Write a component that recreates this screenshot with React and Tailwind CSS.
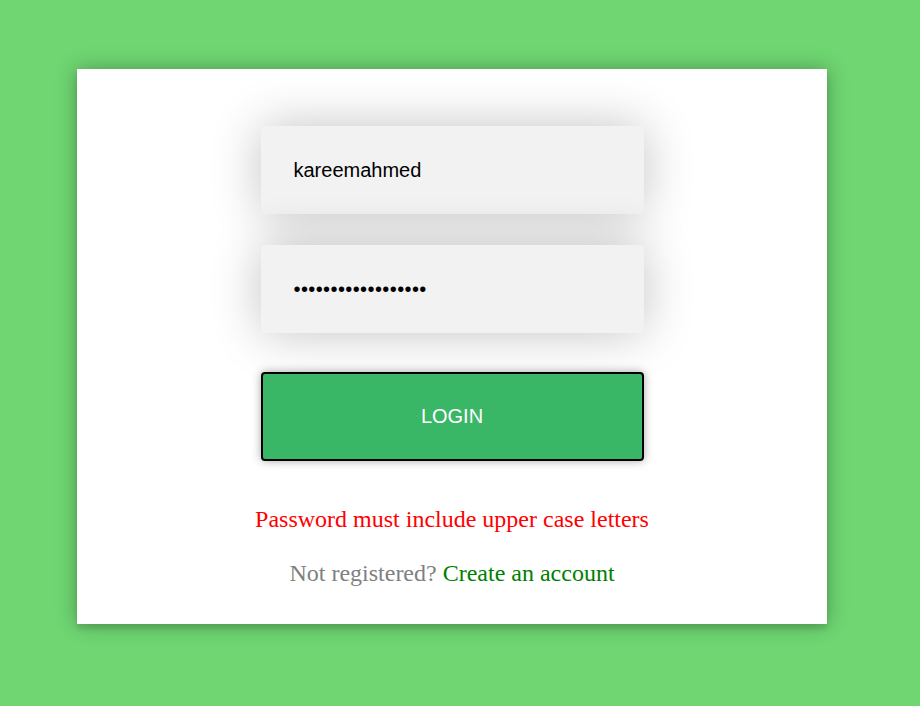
export default function App() {
  return (
    <div className="min-h-[706px] w-[920px] bg-[#6fd672] pt-[69px] pl-[77px]">
      <div className="flex h-[555px] w-[750px] flex-col items-center bg-white pt-[57px] shadow-[0_0_20px_rgba(0,0,0,0.3),0_5px_5px_rgba(0,0,0,0.1)]">
        <div className="flex h-[88px] w-[383px] items-center rounded-[4px] bg-[#f2f2f2] pl-[33px] shadow-[0_0_50px_rgba(0,0,0,0.24)] font-['Liberation_Sans',Arial,sans-serif] text-[20px] text-black">
          kareemahmed
        </div>
        <div className="mt-[31px] flex h-[88px] w-[383px] items-center rounded-[4px] bg-[#f2f2f2] pl-[33px] shadow-[0_0_50px_rgba(0,0,0,0.24)] font-['Liberation_Sans',Arial,sans-serif] text-[20px] tracking-[0.4px] text-black">
          ••••••••••••••••••
        </div>
        <button className="mt-[39px] flex h-[89px] w-[383px] items-center justify-center rounded-[4px] border-2 border-black bg-[#3ab667] pb-[2px] font-['Liberation_Sans',Arial,sans-serif] text-[20px] text-white shadow-[0_0_10px_rgba(0,0,0,0.35)]">
          LOGIN
        </button>
        <p className="mt-[44px] font-['Liberation_Serif','Times_New_Roman',serif] text-[24px] leading-[28px] text-[#ff0000]">
          Password must include upper case letters
        </p>
        <p className="mt-[26px] font-['Liberation_Serif','Times_New_Roman',serif] text-[24px] leading-[28px] text-[#808080]">
          Not registered? <span className="text-[#008000]">Create an account</span>
        </p>
      </div>
    </div>
  );
}
